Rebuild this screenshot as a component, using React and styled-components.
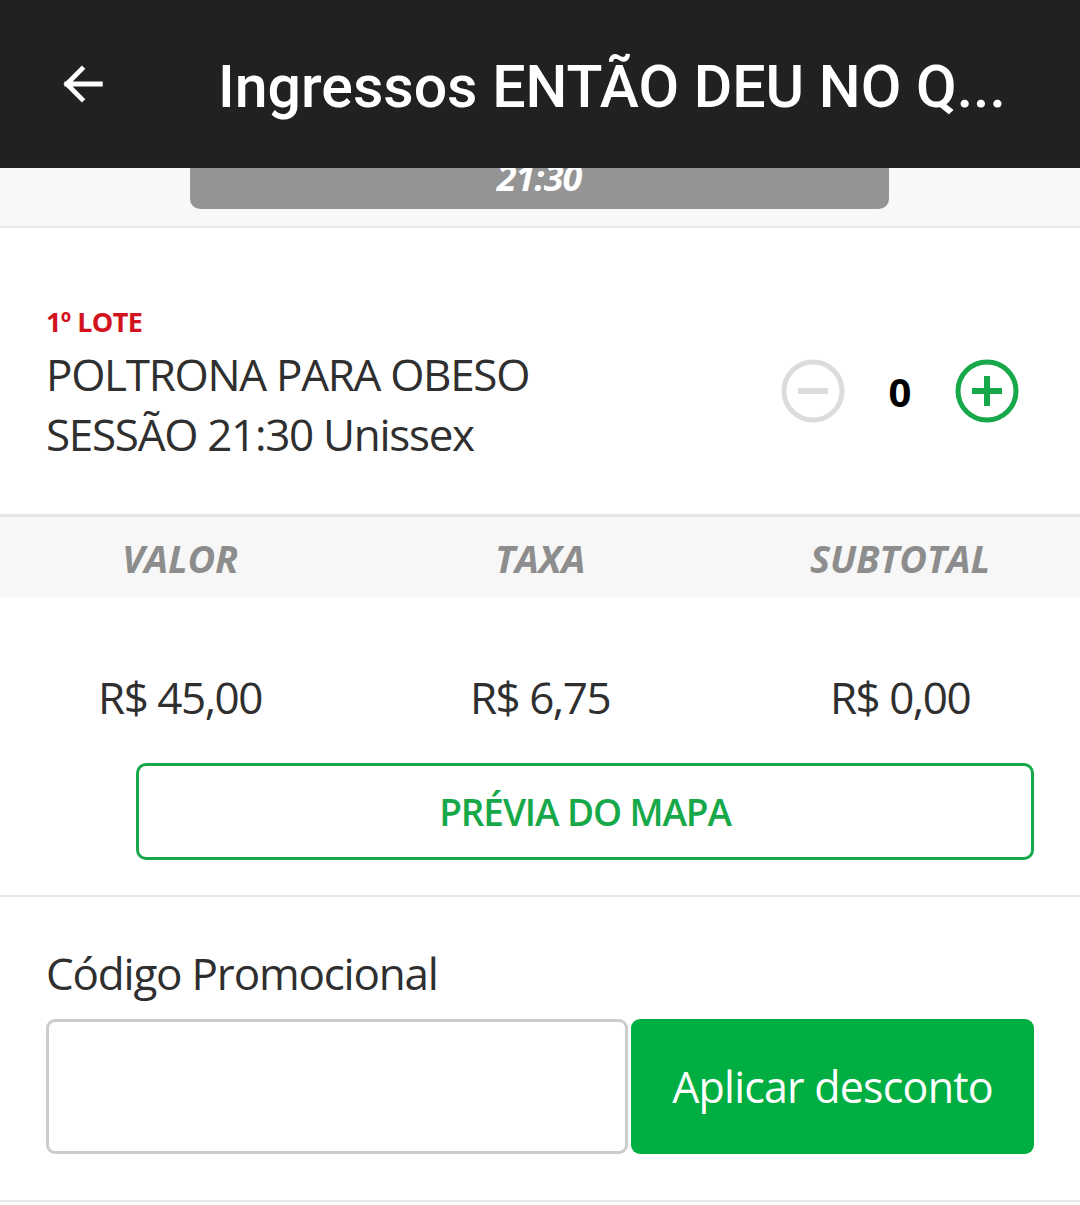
import React from 'react';
import styled, { createGlobalStyle } from 'styled-components';

const GlobalStyle = createGlobalStyle`
  html, body {
    margin: 0;
    padding: 0;
    background: #fff;
  }
  body {
    font-family: 'Open Sans', 'Liberation Sans', sans-serif;
    color: #333;
  }
`;

const GREEN = '#17a84a';

function BackArrow() {
  return (
    <svg width="52" height="52" viewBox="0 0 24 24" fill="none">
      <path
        d="M20 12H4.5M11.5 5L4.5 12l7 7"
        stroke="#fff"
        strokeWidth="2.2"
        strokeLinecap="square"
      />
    </svg>
  );
}

function RoundButton({ kind, color }) {
  return (
    <svg width="66" height="66" viewBox="0 0 66 66" fill="none">
      <circle cx="33" cy="33" r="29" stroke={color} strokeWidth="5" />
      <path d="M18 33h30" stroke={color} strokeWidth="6" />
      {kind === 'plus' && <path d="M33 18v30" stroke={color} strokeWidth="6" />}
    </svg>
  );
}

function Counter({ value }) {
  return (
    <CounterRow>
      <RoundButton kind="minus" color="#dcdcdc" />
      <Count>{value}</Count>
      <RoundButton kind="plus" color={GREEN} />
    </CounterRow>
  );
}

const columns = [
  { label: 'VALOR', value: 'R$ 45,00' },
  { label: 'TAXA', value: 'R$ 6,75' },
  { label: 'SUBTOTAL', value: 'R$ 0,00' },
];

export default function App() {
  return (
    <Page>
      <GlobalStyle />
      <TopBar>
        <BackButton>
          <BackArrow />
        </BackButton>
        <Title>Ingressos ENTÃO DEU NO Q...</Title>
      </TopBar>

      <SessionStrip>
        <SessionPill>21:30</SessionPill>
      </SessionStrip>

      <Ticket>
        <TicketInfo>
          <Lote>1º LOTE</Lote>
          <TicketName>
            POLTRONA PARA OBESO
            <br />
            SESSÃO 21:30 Unissex
          </TicketName>
        </TicketInfo>
        <Counter value={0} />
      </Ticket>

      <PriceHead>
        {columns.map(c => (
          <HeadCell key={c.label}>{c.label}</HeadCell>
        ))}
      </PriceHead>

      <PriceBody>
        <PriceRow>
          {columns.map(c => (
            <PriceCell key={c.label}>{c.value}</PriceCell>
          ))}
        </PriceRow>
        <MapButton>PRÉVIA DO MAPA</MapButton>
      </PriceBody>

      <Promo>
        <PromoLabel>Código Promocional</PromoLabel>
        <PromoRow>
          <PromoInput type="text" />
          <ApplyButton>Aplicar desconto</ApplyButton>
        </PromoRow>
      </Promo>
    </Page>
  );
}

const Page = styled.div`
  width: 1080px;
  min-height: 1205px;
  background: #fff;
`;

const TopBar = styled.header`
  height: 168px;
  background: #212121;
  display: flex;
  align-items: center;
  position: relative;
  z-index: 2;
`;

const BackButton = styled.div`
  width: 218px;
  display: flex;
  align-items: center;
  padding-left: 57px;
  box-sizing: border-box;
`;

const Title = styled.h1`
  margin: 0;
  font-family: Roboto, 'Liberation Sans', sans-serif;
  font-weight: 500;
  font-size: 59px;
  color: #fff;
  white-space: nowrap;
  padding-top: 4px;
`;

const SessionStrip = styled.div`
  height: 58px;
  background: #f8f8f8;
  border-bottom: 2px solid #e6e6e6;
  overflow: hidden;
  display: flex;
  justify-content: center;
`;

const SessionPill = styled.div`
  width: 699px;
  height: 64px;
  margin-top: -23px;
  margin-left: -2px;
  background: #949494;
  border-radius: 0 0 10px 10px;
  color: #fff;
  font-weight: 700;
  font-style: italic;
  font-size: 36px;
  letter-spacing: -1px;
  display: flex;
  align-items: center;
  justify-content: center;
`;

const Ticket = styled.section`
  height: 289px;
  box-sizing: border-box;
  padding: 0 60px 0 46px;
  display: flex;
  align-items: center;
  justify-content: space-between;
  border-bottom: 3px solid #e4e4e4;
`;

const TicketInfo = styled.div`
  display: flex;
  flex-direction: column;
  padding-top: 22px;
`;

const Lote = styled.div`
  color: #d2121c;
  font-weight: 700;
  font-size: 27px;
  line-height: 44px;
  letter-spacing: -0.6px;
`;

const TicketName = styled.div`
  color: #2f2f2f;
  font-size: 44px;
  line-height: 60px;
  letter-spacing: -1.3px;
`;

const CounterRow = styled.div`
  display: flex;
  align-items: center;
  margin-top: 40px;
`;

const Count = styled.span`
  width: 108px;
  text-align: center;
  font-weight: 700;
  font-size: 40px;
  color: #000;
`;

const PriceHead = styled.div`
  height: 80px;
  background: #f7f7f7;
  display: grid;
  grid-template-columns: repeat(3, 1fr);
  align-items: center;
`;

const HeadCell = styled.div`
  text-align: center;
  color: #8d8d8d;
  font-weight: 700;
  font-style: italic;
  font-size: 38px;
  letter-spacing: -0.2px;
  padding-top: 1px;
`;

const PriceBody = styled.section`
  height: 300px;
  box-sizing: border-box;
  border-bottom: 2px solid #e8e8e8;
  padding: 70px 46px 0 136px;
  display: flex;
  flex-direction: column;
`;

const PriceRow = styled.div`
  display: grid;
  grid-template-columns: repeat(3, 360px);
  margin-left: -136px;
  margin-right: -46px;
`;

const PriceCell = styled.div`
  text-align: center;
  font-size: 44px;
  line-height: 60px;
  color: #2f2f2f;
  letter-spacing: -1.5px;
`;

const MapButton = styled.button`
  margin-top: 36px;
  height: 97px;
  width: 898px;
  border: 3px solid ${GREEN};
  border-radius: 10px;
  background: #fff;
  color: ${GREEN};
  font-family: 'Open Sans', 'Liberation Sans', sans-serif;
  font-size: 37px;
  font-weight: 600;
  letter-spacing: -1.1px;
  cursor: pointer;
`;

const Promo = styled.section`
  height: 305px;
  box-sizing: border-box;
  padding: 48px 46px 0 46px;
  border-bottom: 2px solid #e8e8e8;
`;

const PromoLabel = styled.div`
  font-size: 44px;
  line-height: 56px;
  color: #2f2f2f;
  letter-spacing: -1.2px;
`;

const PromoRow = styled.div`
  margin-top: 18px;
  display: flex;
  gap: 3px;
  height: 135px;
`;

const PromoInput = styled.input`
  width: 582px;
  box-sizing: border-box;
  border: 3px solid #cccccc;
  border-radius: 9px;
  background: #fff;
  outline: none;
`;

const ApplyButton = styled.button`
  width: 403px;
  border: none;
  border-radius: 9px;
  background: #00ae42;
  color: #fff;
  font-family: 'Open Sans', 'Liberation Sans', sans-serif;
  font-size: 43px;
  letter-spacing: -0.8px;
  cursor: pointer;
`;
